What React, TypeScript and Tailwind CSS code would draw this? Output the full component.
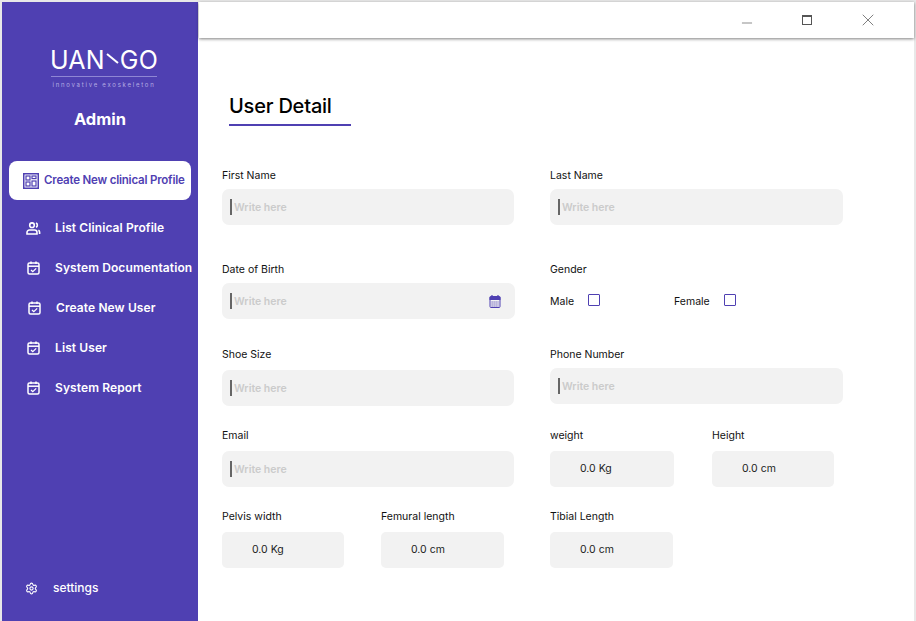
import { Minus, X, Settings } from 'lucide-react';

function GridBoxIcon() {
  return (
    <svg viewBox="0 0 16 16" className="w-[16px] h-[16px] shrink-0" fill="none" stroke="currentColor">
      <rect x="0.75" y="0.75" width="14.5" height="14.5" strokeWidth="1.5" />
      <rect x="3" y="3" width="4" height="4" strokeWidth="1.2" />
      <rect x="9" y="3" width="4" height="2.6" strokeWidth="1.2" />
      <rect x="3" y="9" width="4" height="4" strokeWidth="1.2" />
      <rect x="9" y="8" width="4" height="5" strokeWidth="1.2" />
    </svg>
  );
}

function ProfileIcon() {
  return (
    <svg viewBox="0 0 15 13" className="w-[15px] h-[13px] shrink-0" fill="none" stroke="currentColor" strokeWidth="1.6">
      <circle cx="6" cy="3.2" r="2.3" />
      <path d="M10 1.1 A2.3 2.3 0 0 1 10 5.3" />
      <path d="M1 12 V10.4 A2.4 2.4 0 0 1 3.4 8 H8.6 A2.4 2.4 0 0 1 11 10.4 V12 Z" />
      <path d="M13.6 12 V10 A2.2 2.2 0 0 0 12.4 8.2" />
    </svg>
  );
}

function CalCheckIcon() {
  return (
    <svg viewBox="0 0 13 14" className="w-[13px] h-[14px] shrink-0" fill="none" stroke="currentColor" strokeWidth="1.5">
      <rect x="1" y="2" width="11" height="11" rx="1.5" />
      <path d="M1 5.2 H12" />
      <path d="M4 0.5 V3 M9 0.5 V3" />
      <path d="M4 9 L5.8 10.7 L9.2 7.4" strokeWidth="1.3" />
    </svg>
  );
}

function CalFilledIcon() {
  return (
    <svg viewBox="0 0 12 13" className="ml-auto w-[12px] h-[13px] shrink-0 text-[#4f40b2]" fill="currentColor">
      <path d="M0.5 2.5 A1 1 0 0 1 1.5 1.5 H10.5 A1 1 0 0 1 11.5 2.5 V5 H0.5 Z" />
      <path d="M3 0 V2 M9 0 V2" stroke="currentColor" strokeWidth="1.2" />
      <rect x="1" y="1.5" width="10" height="11" rx="1" fill="none" stroke="currentColor" />
      <path d="M2.5 7 H9.5 M2.5 9 H9.5 M2.5 11 H9.5" stroke="currentColor" strokeWidth="1" strokeDasharray="1.2 0.8" />
    </svg>
  );
}

const navItems = [
  { icon: ProfileIcon, label: 'List Clinical Profile', row: 'pl-[24px] gap-[14px]' },
  { icon: CalCheckIcon, label: 'System Documentation', row: 'pl-[25px] gap-[15px]' },
  { icon: CalCheckIcon, label: 'Create New User', row: 'pl-[26px] gap-[15px]' },
  { icon: CalCheckIcon, label: 'List User', row: 'pl-[25px] gap-[15px]' },
  { icon: CalCheckIcon, label: 'System Report', row: 'pl-[25px] gap-[15px]' },
];

function WriteInput({ calendar, className = '' }: { calendar?: boolean; className?: string }) {
  return (
    <div className={`flex items-center h-[36px] rounded-[7px] bg-[#f2f2f2] pl-[8px] pr-[14px] ${className}`}>
      <span className="w-[2px] h-[16px] bg-[#666]" />
      <span className="ml-[2px] pt-[2px] text-[10.5px] font-semibold text-[#cbcbcb]">Write here</span>
      {calendar && <CalFilledIcon />}
    </div>
  );
}

function Label({ children, className = '' }: { children: string; className?: string }) {
  return <p className={`text-[10.5px] leading-[14px] text-[#111] ${className}`}>{children}</p>;
}

function ValueField({ label, value, width }: { label: string; value: string; width: string }) {
  return (
    <div className={width}>
      <Label>{label}</Label>
      <div className="mt-[8px] h-[36px] rounded-[5px] bg-[#f2f2f2] flex items-center pl-[30px] text-[10.5px] text-[#222]">
        {value}
      </div>
    </div>
  );
}

function CheckBox() {
  return <span className="block w-[12px] h-[12px] rounded-[1px] border-[1.5px] border-[#4f40b2]" />;
}

export default function App() {
  return (
    <div className="w-[916px] h-[621px] overflow-hidden bg-[#e8e8e8] flex pt-[2px] pl-[2px] pr-[2px] font-['Inter',sans-serif]">
      <aside className="w-[196px] h-full bg-[#4f40b2] flex flex-col shrink-0 text-white">
        <div className="mt-[44px] flex flex-col items-center">
          <div className="ml-[8px] flex flex-col items-center">
            <div className="flex items-center h-[28px] text-[25px] leading-none font-normal tracking-[0.2px]">
              UAN
              <svg viewBox="0 0 14 12" className="w-[13px] h-[11px] mx-[1px] mb-[4px]">
                <path d="M1 1 L13 11" stroke="white" strokeWidth="2.2" />
              </svg>
              GO
            </div>
            <div className="w-[106px] h-px bg-[#8f86d4] mt-[2px]" />
            <p className="mt-[3px] text-[6px] leading-[9px] tracking-[1.75px] text-[#b5aee3] whitespace-nowrap">
              innovative exoskeleton
            </p>
          </div>
          <h2 className="mt-[20px] text-[16.5px] leading-[20px] font-bold">Admin</h2>
        </div>

        <nav className="mt-[32px] flex flex-col">
          <div className="ml-[7px] w-[182px] h-[39px] rounded-[8px] bg-white flex items-center pl-[14px] gap-[5px] text-[#4f40b2]">
            <GridBoxIcon />
            <span className="text-[11.5px] font-semibold tracking-[-0.2px] whitespace-nowrap">Create New clinical Profile</span>
          </div>
          <div className="mt-[8px] flex flex-col">
            {navItems.map((item) => (
              <div key={item.label} className={`flex items-center h-[40px] ${item.row}`}>
                <item.icon />
                <span className="text-[12px] font-semibold tracking-[0.1px] whitespace-nowrap">{item.label}</span>
              </div>
            ))}
          </div>
        </nav>

        <div className="mt-auto mb-[24px] flex items-center pl-[23px] gap-[15px]">
          <Settings className="w-[13px] h-[13px]" strokeWidth={2} />
          <span className="text-[12px] font-medium">settings</span>
        </div>
      </aside>

      <main className="flex-1 min-w-0 bg-white">
        <header className="ml-px h-[36px] bg-white shadow-[0_1px_3px_rgba(0,0,0,0.5)] flex items-center justify-end pr-[36px]">
          <Minus className="mt-[5px] w-[16px] h-[16px] text-[#777]" strokeWidth={1.25} />
          <div className="ml-[47px] w-[10px] h-[10px] border border-[#555] border-t-2" />
          <X className="ml-[46px] w-[20px] h-[20px] text-[#666]" strokeWidth={1} />
        </header>

        <div className="pl-[24px]">
          <div className="ml-[7px] mt-[54px] w-[122px] h-[34px] border-b-2 border-[#4f40b2]">
            <h1 className="text-[20px] leading-[28px] font-medium tracking-[-0.2px] text-black">User Detail</h1>
          </div>

          <div className="mt-[43px] flex">
            <div className="w-[292px]">
              <Label>First Name</Label>
              <WriteInput className="mt-[6px]" />
            </div>
            <div className="ml-[36px] w-[293px]">
              <Label>Last Name</Label>
              <WriteInput className="mt-[6px]" />
            </div>
          </div>

          <div className="mt-[38px] flex">
            <div className="w-[293px]">
              <Label>Date of Birth</Label>
              <WriteInput calendar className="mt-[6px]" />
            </div>
            <div className="ml-[35px]">
              <Label>Gender</Label>
              <div className="mt-[13px] flex items-center text-[10.5px] text-[#111]">
                <span className="mt-[4px]">Male</span>
                <span className="ml-[14px]"><CheckBox /></span>
                <span className="ml-[74px] mt-[4px]">Female</span>
                <span className="ml-[14px]"><CheckBox /></span>
              </div>
            </div>
          </div>

          <div className="mt-[29px] flex">
            <div className="w-[292px]">
              <Label>Shoe Size</Label>
              <WriteInput className="mt-[8px]" />
            </div>
            <div className="ml-[36px] w-[293px]">
              <Label>Phone Number</Label>
              <WriteInput className="mt-[6px]" />
            </div>
          </div>

          <div className="mt-[23px] flex">
            <div className="w-[292px]">
              <Label>Email</Label>
              <WriteInput className="mt-[8px]" />
            </div>
            <div className="ml-[36px] flex gap-[38px]">
              <ValueField label="weight" value="0.0 Kg" width="w-[124px]" />
              <ValueField label="Height" value="0.0 cm" width="w-[122px]" />
            </div>
          </div>

          <div className="mt-[23px] flex">
            <ValueField label="Pelvis width" value="0.0 Kg" width="w-[122px]" />
            <ValueField label="Femural length" value="0.0 cm" width="ml-[37px] w-[123px]" />
            <ValueField label="Tibial Length" value="0.0 cm" width="ml-[46px] w-[123px]" />
          </div>
        </div>
      </main>
    </div>
  );
}
